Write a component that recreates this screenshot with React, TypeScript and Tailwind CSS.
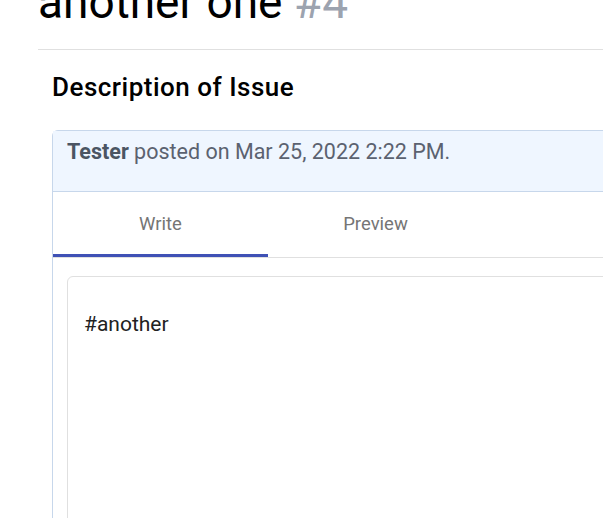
import React, { useState } from 'react'

function IssueCard() {
    const [tab, setTab] = useState<'write' | 'preview'>('write')

    return (
        <div className="mt-[28px] w-[700px] rounded-tl-md border border-[#c7d7eb]">
            <div className="h-[61px] bg-[#eff6ff] border-b border-[#c7d7eb] pl-[14px] pt-[5px] text-[21.5px] text-[#5b6270]">
                <span className="font-bold text-[#4b5563]">Tester</span> posted on Mar 25, 2022 2:22 PM.
            </div>
            <div className="flex border-b border-[#e0e0e0]">
                {(['write', 'preview'] as const).map((t) => (
                    <button
                        key={t}
                        onClick={() => setTab(t)}
                        className={
                            'w-[215px] h-[65px] text-[18.5px] text-[#757575] border-b-[3px] pt-[3px] ' +
                            (tab === t ? 'border-[#3f51b5]' : 'border-transparent')
                        }
                    >
                        {t === 'write' ? 'Write' : 'Preview'}
                    </button>
                ))}
            </div>
            <div className="px-[14px] pt-[18px]">
                <div className="h-[300px] rounded-md border border-[#e0e0e0] px-[16px] pt-[32px] text-[21px] text-[#222]">
                    #another
                </div>
            </div>
        </div>
    )
}

export default function App() {
    return (
        <div className="h-[518px] overflow-hidden bg-white font-['Roboto',sans-serif]">
            <div className="-mt-[28px] pl-[38px]">
                <h1 className="w-[700px] border-b border-[#e0e0e0] pb-[17px] text-[46px] font-normal leading-[60px] text-black">
                    another one <span className="text-[#9ca3af]">#4</span>
                </h1>
                <div className="pl-[14px]">
                    <h2 className="mt-[22px] text-[26px] font-medium tracking-[0.5px] leading-[30px] text-black">
                        Description of Issue
                    </h2>
                    <IssueCard />
                </div>
            </div>
        </div>
    )
}
